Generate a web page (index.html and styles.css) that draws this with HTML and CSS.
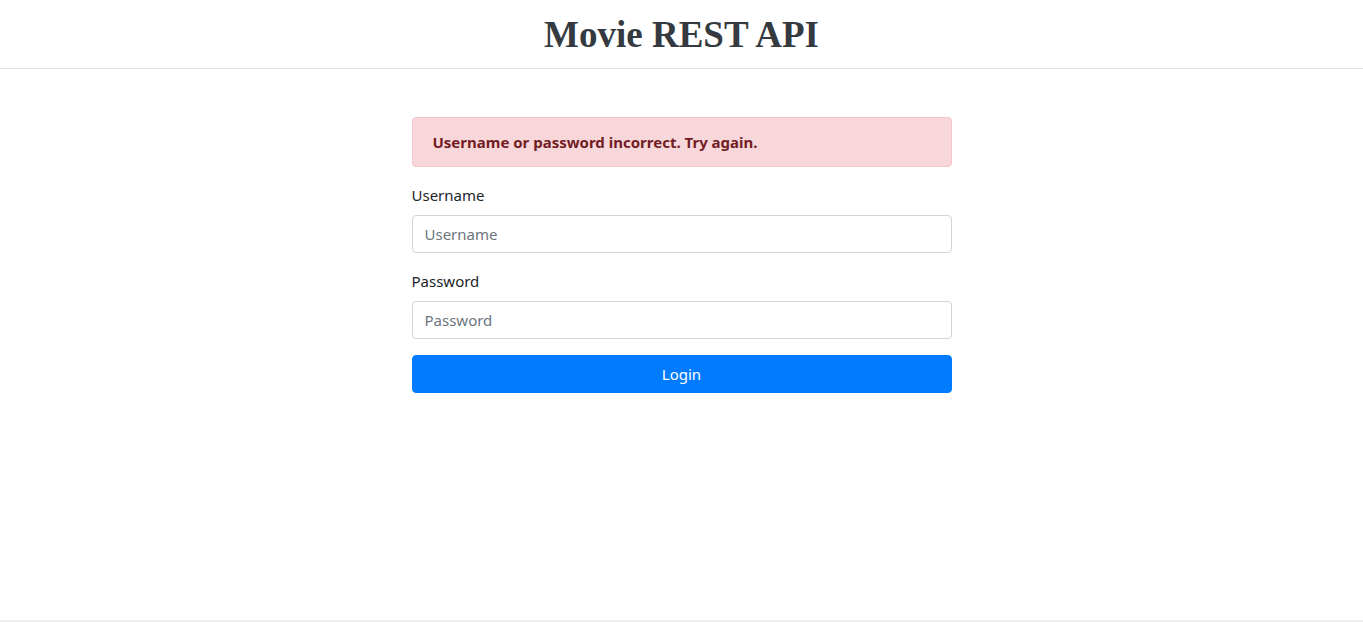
FILE: index.html
```html
<!DOCTYPE html>
<html lang="en">
<head>
<meta charset="utf-8">
<title>Movie REST API</title>
<link rel="stylesheet" href="styles.css">
</head>
<body>
<div class="page">
  <header class="site-header">
    <h1 class="site-title">Movie REST API</h1>
  </header>
  <main class="main">
    <div class="login">
      <div class="alert">Username or password incorrect. Try again.</div>
      <form class="form">
        <div class="form-group">
          <label class="label" for="username">Username</label>
          <input class="input" id="username" type="text" placeholder="Username">
        </div>
        <div class="form-group">
          <label class="label" for="password">Password</label>
          <input class="input" id="password" type="password" placeholder="Password">
        </div>
        <button class="btn" type="button">Login</button>
      </form>
    </div>
  </main>
  <footer class="site-footer"></footer>
</div>
</body>
</html>
```
FILE: styles.css
```css
* { box-sizing: border-box; }
html, body { margin: 0; padding: 0; }
body {
  font-family: "Noto Sans", "Open Sans", sans-serif;
  font-size: 16px;
  line-height: 1.5;
  color: #212529;
  background: #fff;
}
.page {
  display: flex;
  flex-direction: column;
}
.site-header {
  height: 69px;
  border-bottom: 1px solid #e3e3e3;
  display: flex;
  align-items: center;
  justify-content: center;
}
.site-title {
  margin: 0;
  font-family: "Liberation Serif", "DejaVu Serif", serif;
  font-weight: 700;
  font-size: 37px;
  color: #343a40;
  line-height: 1.2;
  padding-top: 2px;
}
.main {
  height: 551px;
  display: flex;
  justify-content: center;
}
.login {
  width: 540px;
  margin-top: 48px;
}
.alert {
  height: 50px;
  padding: 12px 20px;
  border: 1px solid #f5c6cb;
  border-radius: 4px;
  background: #f8d7da;
  color: #721c24;
  font-weight: 700;
  font-size: 15px;
  line-height: 24px;
  margin-bottom: 16px;
}
.form-group {
  margin-bottom: 16px;
  display: flex;
  flex-direction: column;
}
.label {
  font-size: 15px;
  line-height: 24px;
  margin-bottom: 8px;
}
.input {
  height: 38px;
  padding: 6px 12px;
  border: 1px solid #ced4da;
  border-radius: 4px;
  font-family: inherit;
  font-size: 15px;
  color: #495057;
  background: #fff;
}
.input::placeholder { color: #6c757d; }
.btn {
  width: 100%;
  height: 38px;
  border: 1px solid #007bff;
  border-radius: 4px;
  background: #007bff;
  color: #fff;
  font-family: inherit;
  font-size: 15px;
  line-height: 24px;
  padding: 6px 12px;
}
.site-footer {
  height: 2px;
  border-top: 2px solid #f0f0f0;
  background: #fff;
}
```
